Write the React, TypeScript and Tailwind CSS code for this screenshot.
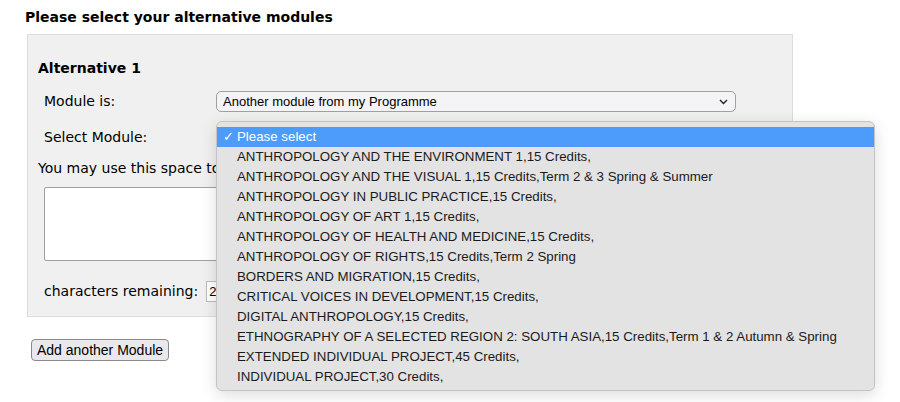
import React from "react";

const modules = [
  "ANTHROPOLOGY AND THE ENVIRONMENT 1,15 Credits,",
  "ANTHROPOLOGY AND THE VISUAL 1,15 Credits,Term 2 & 3 Spring & Summer",
  "ANTHROPOLOGY IN PUBLIC PRACTICE,15 Credits,",
  "ANTHROPOLOGY OF ART 1,15 Credits,",
  "ANTHROPOLOGY OF HEALTH AND MEDICINE,15 Credits,",
  "ANTHROPOLOGY OF RIGHTS,15 Credits,Term 2 Spring",
  "BORDERS AND MIGRATION,15 Credits,",
  "CRITICAL VOICES IN DEVELOPMENT,15 Credits,",
  "DIGITAL ANTHROPOLOGY,15 Credits,",
  "ETHNOGRAPHY OF A SELECTED REGION 2: SOUTH ASIA,15 Credits,Term 1 & 2 Autumn & Spring",
  "EXTENDED INDIVIDUAL PROJECT,45 Credits,",
  "INDIVIDUAL PROJECT,30 Credits,",
];

const sys = "font-['Liberation_Sans',Arial,sans-serif]";

export default function App() {
  return (
    <div className="relative w-[900px] h-[402px] bg-white text-black font-['DejaVu_Sans',Verdana,sans-serif] overflow-hidden">
      <h1 className="pl-[25px] pt-[9px] text-[14px] leading-[17px] font-bold">Please select your alternative modules</h1>

      <div className="ml-[27px] mt-[8px] w-[766px] h-[283px] bg-[#f0f0f0] border border-[#dcdcdc] pl-[10px]">
        <h2 className="pt-[25px] text-[14px] leading-[17px] font-bold">Alternative 1</h2>

        <div className="mt-[14px] flex items-center h-[21px] text-[14px]">
          <span className="pl-[6px] w-[178px]">Module is:</span>
          <div className={`${sys} flex items-center justify-between w-[520px] h-[21px] px-[6px] rounded-[5px] border border-[#a0a0a0] bg-[#f4f4f6] text-[13px]`}>
            <span>Another module from my Programme</span>
            <svg width="9" height="6" viewBox="0 0 9 6" className="mr-[1px]">
              <path d="M1 1 L4.5 4.5 L8 1" fill="none" stroke="#222" strokeWidth="1.4" />
            </svg>
          </div>
        </div>

        <div className="mt-[15px] flex items-center h-[21px] text-[14px]">
          <span className="pl-[6px] w-[178px]">Select Module:</span>
          <div className="w-[520px] h-[21px] rounded-[5px] border border-[#a0a0a0] bg-[#f4f4f6]" />
        </div>

        {/* the open dropdown covers the rest of this line */}
        <p className="mt-[12px] w-[178px] overflow-hidden text-[14px] leading-[17px] whitespace-nowrap">You may use this space to tell us more about your choice</p>

        <div className="ml-[6px] mt-[10px] w-[420px] h-[74px] bg-white border border-[#a0a0a0] rounded-[2px]" />

        <div className="mt-[20px] flex items-center text-[14px]">
          <span className="pl-[6px]">characters remaining:</span>
          <div className={`${sys} ml-[8px] w-[40px] h-[21px] bg-white border border-[#bdbdbd] pl-[2px] text-[13px] leading-[19px]`}>200</div>
        </div>
      </div>

      <button className={`${sys} ml-[31px] mt-[22px] h-[22px] px-[5px] rounded-[4px] border border-[#8a8a8a] bg-[#e9e9ed] text-[14px] leading-[20px]`}>
        Add another Module
      </button>

      <div className={`${sys} absolute left-[216px] top-[121px] w-[659px] h-[270px] py-[5px] rounded-[6px] bg-[#e3e3e3] border border-[#c4c4c4] shadow-[0_4px_16px_rgba(0,0,0,0.14)] text-[13.3px] text-[#1a1a1a]`}>
        <div className="h-[20px] flex items-center bg-[#4d9bfa] text-white">
          <span className="w-[20px] pl-[6px] text-[13px]">✓</span>
          <span>Please select</span>
        </div>
        {modules.map((m) => (
          <div key={m} className="h-[20px] flex items-center pl-[20px]">
            {m}
          </div>
        ))}
      </div>
    </div>
  );
}
